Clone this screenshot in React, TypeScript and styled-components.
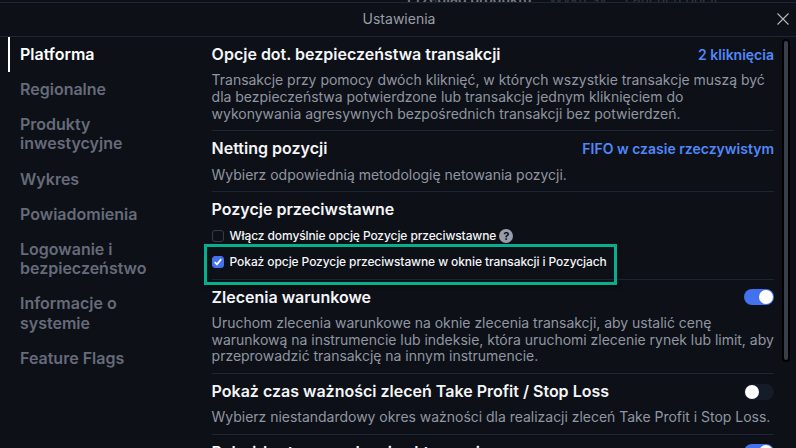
import React from "react";
import styled, { createGlobalStyle } from "styled-components";

const Global = createGlobalStyle`
  * { box-sizing: border-box; }
  body { margin: 0; background: #0d1017; font-family: Inter, sans-serif; color: #f4f5f7; }
`;

const Page = styled.div`
  width: 796px;
  height: 448px;
  overflow: hidden;
  display: flex;
  flex-direction: column;
  background: #0d1017;
`;

const Backdrop = styled.div`
  flex: 0 0 2px;
  overflow: hidden;
  display: flex;
  gap: 17.5px;
  align-items: flex-end;
  padding-left: 407px;
  font-size: 14px;
  line-height: 14px;
`;

const BackdropTab = styled.span<{ $active?: boolean }>`
  font-weight: ${(p) => (p.$active ? 600 : 400)};
  color: ${(p) => (p.$active ? "#777a80" : "#343841")};
  margin-bottom: -4px;
`;

const Header = styled.header`
  flex: 0 0 35px;
  display: grid;
  grid-template-columns: 1fr auto 1fr;
  align-items: center;
  border-top: 1px solid #1d2635;
  border-bottom: 1px solid #1d2635;
`;

const HeaderTitle = styled.div`
  grid-column: 2;
  padding: 0 0 2px 2px;
  font-size: 14px;
  line-height: 18px;
  color: #999da6;
`;

const Close = styled.button`
  justify-self: end;
  margin: 0 7px 1px 0;
  padding: 0;
  border: 0;
  background: none;
  display: flex;
`;

const Body = styled.div`
  flex: 1;
  min-height: 0;
  display: flex;
`;

const Nav = styled.nav`
  width: 211.6px;
  padding-left: 8px;
`;

const NavItem = styled.div<{ $active?: boolean }>`
  width: 160px;
  padding: 7.8px 0 8.2px 10px;
  border-left: 2px solid ${(p) => (p.$active ? "#fff" : "transparent")};
  font-size: 16px;
  line-height: 19.2px;
  font-weight: 600;
  color: ${(p) => (p.$active ? "#fff" : "#666b7a")};
`;

const Content = styled.main`
  width: 562.4px;
`;

const Section = styled.section<{ $height: number }>`
  height: ${(p) => p.$height}px;
  padding-top: 8px;
  border-bottom: 1px solid #1d2635;
`;

const SectionHead = styled.div`
  display: flex;
  justify-content: space-between;
  align-items: center;
  height: 19px;
`;

const Title = styled.h2`
  margin: 0;
  font-size: 16px;
  line-height: 19px;
  font-weight: 600;
  white-space: nowrap;
`;

const Link = styled.a`
  font-size: 14px;
  line-height: 17px;
  font-weight: 600;
  color: #5088fa;
`;

const Text = styled.p<{ $gap?: number; $leading?: number }>`
  margin: ${(p) => p.$gap ?? 8}px 0 0;
  font-size: 14px;
  line-height: ${(p) => p.$leading ?? 17}px;
  letter-spacing: -0.022px;
  color: #9096a1;
  white-space: nowrap;
`;

const Toggle = styled.span<{ $on?: boolean }>`
  display: flex;
  justify-content: ${(p) => (p.$on ? "flex-end" : "flex-start")};
  width: 30px;
  height: 16px;
  margin-top: ${(p) => (p.$on ? -1 : 1)}px;
  padding: 1px;
  border-radius: 8px;
  background: ${(p) => (p.$on ? "#4272ee" : "#161b28")};
  &::after {
    content: "";
    width: 14px;
    height: 14px;
    border-radius: 50%;
    background: #fff;
  }
`;

const CheckRow = styled.label`
  display: flex;
  align-items: center;
  height: 16px;
  margin-top: 9px;
  font-size: 12px;
  line-height: 16px;
  font-weight: 500;
  letter-spacing: -0.095px;
  white-space: nowrap;
  & + & { margin-top: 10px; }
`;

const Box = styled.span<{ $on?: boolean }>`
  display: flex;
  width: 12px;
  height: 12px;
  margin-right: 6px;
  border-radius: 3px;
  border: 1px solid ${(p) => (p.$on ? "#4272ee" : "#363b48")};
  background: ${(p) => (p.$on ? "#4272ee" : "transparent")};
`;

const Help = styled.span`
  display: grid;
  place-items: center;
  width: 14px;
  height: 14px;
  margin-left: 3px;
  border-radius: 50%;
  background: #999daa;
  color: #0d1017;
  font-size: 11px;
  line-height: 14px;
  font-weight: 700;
`;

const Marked = styled.div`
  position: relative;
`;

const Highlight = styled.div`
  position: absolute;
  left: -7.6px;
  top: 52px;
  width: 413px;
  height: 41px;
  border: 3px solid #05b08f;
  box-shadow: 1px 2px 3px rgba(0, 0, 0, 0.6);
`;

const Gutter = styled.div`
  margin-left: 8px;
  width: 8px;
  height: 323px;
  margin-top: 2px;
  padding: 2px;
  border-radius: 4px;
  background: #000;
`;

const Thumb = styled.div`
  height: 100%;
  border-radius: 2px;
  background: #383e4b;
`;

const navItems = [
  "Platforma",
  "Regionalne",
  "Produkty inwestycyjne",
  "Wykres",
  "Powiadomienia",
  "Logowanie i bezpieczeństwo",
  "Informacje o systemie",
  "Feature Flags",
];

export default function App() {
  return (
    <Page>
      <Global />
      <Backdrop>
        <BackdropTab $active>Przegląd produktu</BackdropTab>
        <BackdropTab>Wykresy</BackdropTab>
        <BackdropTab>Łańcuch opcji</BackdropTab>
      </Backdrop>
      <Header>
        <HeaderTitle>Ustawienia</HeaderTitle>
        <Close aria-label="Zamknij">
          <svg width="12" height="12" viewBox="0 0 12 12" stroke="#b4b7be" strokeWidth="1.1">
            <path d="M.5.5l11 11M11.5.5l-11 11" />
          </svg>
        </Close>
      </Header>
      <Body>
        <Nav>
          {navItems.map((item, i) => (
            <NavItem key={item} $active={i === 0}>{item}</NavItem>
          ))}
        </Nav>
        <Content>
          <Section $height={94}>
            <SectionHead>
              <Title>Opcje dot. bezpieczeństwa transakcji</Title>
              <Link>2 kliknięcia</Link>
            </SectionHead>
            <Text $gap={7}>
              Transakcje przy pomocy dwóch kliknięć, w których wszystkie transakcje muszą być<br />
              dla bezpieczeństwa potwierdzone lub transakcje jednym kliknięciem do<br />
              wykonywania agresywnych bezpośrednich transakcji bez potwierdzeń.
            </Text>
          </Section>
          <Section $height={61}>
            <SectionHead>
              <Title>Netting pozycji</Title>
              <Link>FIFO w czasie rzeczywistym</Link>
            </SectionHead>
            <Text>Wybierz odpowiednią metodologię netowania pozycji.</Text>
          </Section>
          <Marked>
            <Section $height={88}>
              <SectionHead>
                <Title>Pozycje przeciwstawne</Title>
              </SectionHead>
              <CheckRow>
                <Box />
                Włącz domyślnie opcję Pozycje przeciwstawne
                <Help>?</Help>
              </CheckRow>
              <CheckRow>
                <Box $on>
                  <svg width="10" height="10" viewBox="0 0 10 10" fill="none" stroke="#fff" strokeWidth="1.8">
                    <path d="M1.7 5.2l2.2 2.2 4.3-5.3" />
                  </svg>
                </Box>
                Pokaż opcje Pozycje przeciwstawne w oknie transakcji i Pozycjach
              </CheckRow>
            </Section>
            <Highlight />
          </Marked>
          <Section $height={94}>
            <SectionHead>
              <Title>Zlecenia warunkowe</Title>
              <Toggle $on />
            </SectionHead>
            <Text $gap={8.1} $leading={16.6}>
              Uruchom zlecenia warunkowe na oknie zlecenia transakcji, aby ustalić cenę<br />
              warunkową na instrumencie lub indeksie, która uruchomi zlecenie rynek lub limit, aby<br />
              przeprowadzić transakcję na innym instrumencie.
            </Text>
          </Section>
          <Section $height={61}>
            <SectionHead>
              <Title>Pokaż czas ważności zleceń Take Profit / Stop Loss</Title>
              <Toggle />
            </SectionHead>
            <Text $gap={7}>Wybierz niestandardowy okres ważności dla realizacji zleceń Take Profit i Stop Loss.</Text>
          </Section>
          <Section $height={61}>
            <SectionHead>
              <Title>Pokaż kartę zarządzania aktywami</Title>
              <Toggle $on />
            </SectionHead>
          </Section>
        </Content>
        <Gutter><Thumb /></Gutter>
      </Body>
    </Page>
  );
}
